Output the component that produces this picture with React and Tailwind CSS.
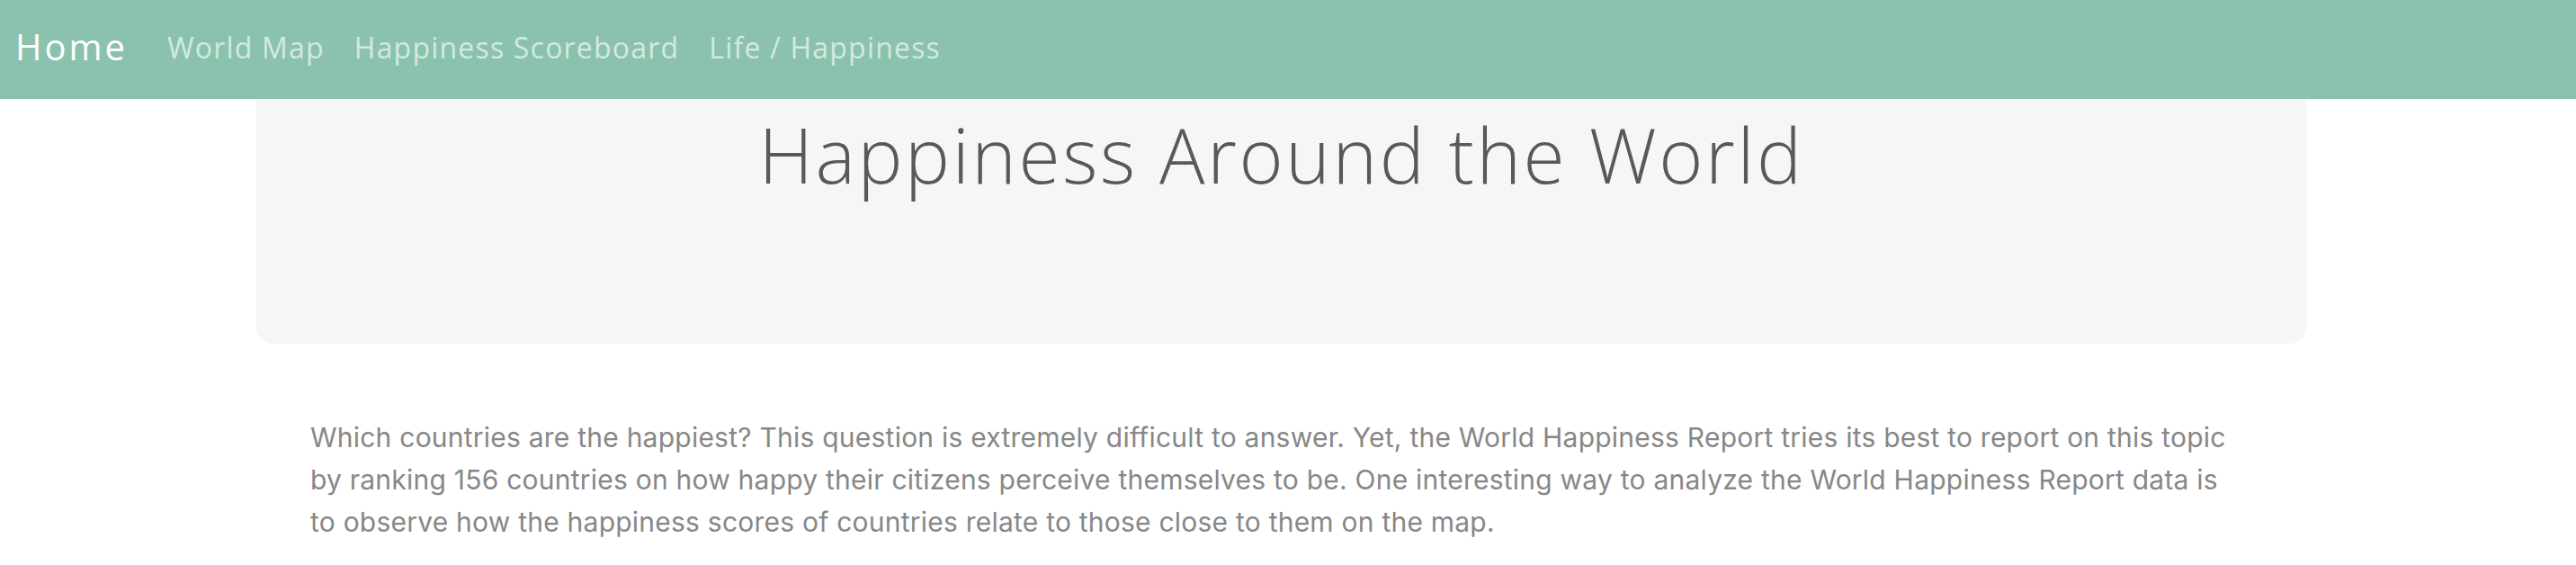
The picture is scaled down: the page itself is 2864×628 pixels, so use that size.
export default function App() {
  const links = ['World Map', 'Happiness Scoreboard', 'Life / Happiness']

  return (
    <div className="min-h-[628px] bg-white">
      <nav className="flex h-[110px] items-center bg-[#8bc2ae] pl-[17px] font-['Open_Sans',sans-serif]">
        <a className="pb-[6px] text-[40px] tracking-[3px] text-white">Home</a>
        <div className="ml-[44px] flex gap-[33px] pb-[4px]">
          {links.map((link) => (
            <a key={link} className="text-[32px] tracking-[1.2px] text-[#d3e9e1]">{link}</a>
          ))}
        </div>
      </nav>

      <section className="ml-[285px] flex h-[272px] w-[2279px] justify-center rounded-b-[18px] bg-[#f6f6f8] pt-[12px]">
        <h1 className="font-['Open_Sans',sans-serif] text-[84px] font-light leading-[1.2] tracking-[2.6px] text-[#595959]">Happiness Around the World</h1>
      </section>

      <p className="ml-[345px] mt-[81px] w-[2152px] font-['Inter',sans-serif] text-[30px] leading-[47px] tracking-[0.23px] text-[#878787]">
        Which countries are the happiest? This question is extremely difficult to answer. Yet, the World Happiness Report tries its best to report on this topic by ranking 156 countries on how happy their citizens perceive themselves to be. One interesting way to analyze the World Happiness Report data is to observe how the happiness scores of countries relate to those close to them on the map.
      </p>
    </div>
  )
}
